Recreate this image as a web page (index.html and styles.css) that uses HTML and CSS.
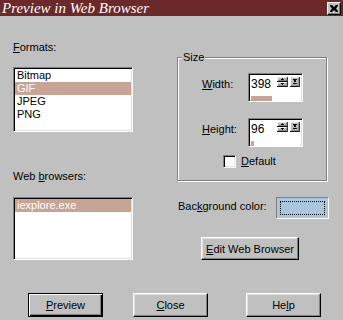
FILE: index.html
```html
<!DOCTYPE html>
<html lang="en">
<head>
  <meta charset="UTF-8">
  <title>Preview in Web Browser</title>
  <link rel="stylesheet" href="styles.css">
</head>
<body>
  <div class="window">
    <!-- title bar -->
    <div class="titlebar">
      <span class="title">Preview in Web Browser</span>
      <button class="close-btn">
        <svg width="8" height="7" viewBox="0 0 8 7">
          <path d="M0 0h2l2 2 2-2h2v1L6 3.5 8 6v1H6L4 5 2 7H0V6l2-2.5L0 1z" fill="#000"/>
        </svg>
      </button>
    </div>

    <div class="dialog">
      <!-- left column: lists -->
      <div class="col-left">
        <label class="caption"><u>F</u>ormats:</label>
        <ul class="listbox listbox-formats">
          <li>Bitmap</li>
          <li class="selected">GIF</li>
          <li>JPEG</li>
          <li>PNG</li>
        </ul>
        <label class="caption caption-browsers">Web <u>b</u>rowsers:</label>
        <ul class="listbox listbox-browsers">
          <li class="selected">iexplore.exe</li>
        </ul>
      </div>

      <!-- right column: size and colour -->
      <div class="col-right">
        <fieldset class="group">
          <legend>Size</legend>
          <div class="group-body">
            <div class="field-row">
              <label class="field-label"><u>W</u>idth:</label>
              <div class="spin">
                <div class="spin-main">
                  <span class="spin-value">398</span>
                  <svg class="spin-arrows" width="11" height="10" viewBox="0 0 11 10">
                    <rect x="0" y="0" width="11" height="5" fill="#000"/>
                    <rect x="0" y="0" width="10" height="4" fill="#fff"/>
                    <rect x="1" y="1" width="9" height="3" fill="#808080"/>
                    <rect x="1" y="1" width="8" height="2" fill="#c0c0c0"/>
                    <rect x="5" y="1" width="1" height="1" fill="#000"/>
                    <rect x="4" y="2" width="3" height="1" fill="#000"/>
                    <rect x="0" y="5" width="11" height="5" fill="#000"/>
                    <rect x="0" y="5" width="10" height="4" fill="#fff"/>
                    <rect x="1" y="6" width="9" height="3" fill="#808080"/>
                    <rect x="1" y="6" width="8" height="2" fill="#c0c0c0"/>
                    <rect x="4" y="6" width="3" height="1" fill="#000"/>
                    <rect x="5" y="7" width="1" height="1" fill="#000"/>
                  </svg>
                  <svg class="spin-drop" width="10" height="10" viewBox="0 0 10 10">
                    <rect x="0" y="0" width="10" height="10" fill="#000"/>
                    <rect x="0" y="0" width="9" height="9" fill="#fff"/>
                    <rect x="1" y="1" width="8" height="8" fill="#808080"/>
                    <rect x="1" y="1" width="7" height="7" fill="#c0c0c0"/>
                    <rect x="3" y="2" width="4" height="1" fill="#000"/>
                    <rect x="4" y="3" width="2" height="2" fill="#000"/>
                    <rect x="3" y="6" width="4" height="1" fill="#000"/>
                  </svg>
                </div>
                <div class="spin-bar"><div class="spin-fill" style="width: 21px"></div></div>
              </div>
            </div>
            <div class="field-row field-row-height">
              <label class="field-label"><u>H</u>eight:</label>
              <div class="spin">
                <div class="spin-main">
                  <span class="spin-value">96</span>
                  <svg class="spin-arrows" width="11" height="10" viewBox="0 0 11 10">
                    <rect x="0" y="0" width="11" height="5" fill="#000"/>
                    <rect x="0" y="0" width="10" height="4" fill="#fff"/>
                    <rect x="1" y="1" width="9" height="3" fill="#808080"/>
                    <rect x="1" y="1" width="8" height="2" fill="#c0c0c0"/>
                    <rect x="5" y="1" width="1" height="1" fill="#000"/>
                    <rect x="4" y="2" width="3" height="1" fill="#000"/>
                    <rect x="0" y="5" width="11" height="5" fill="#000"/>
                    <rect x="0" y="5" width="10" height="4" fill="#fff"/>
                    <rect x="1" y="6" width="9" height="3" fill="#808080"/>
                    <rect x="1" y="6" width="8" height="2" fill="#c0c0c0"/>
                    <rect x="4" y="6" width="3" height="1" fill="#000"/>
                    <rect x="5" y="7" width="1" height="1" fill="#000"/>
                  </svg>
                  <svg class="spin-drop" width="10" height="10" viewBox="0 0 10 10">
                    <rect x="0" y="0" width="10" height="10" fill="#000"/>
                    <rect x="0" y="0" width="9" height="9" fill="#fff"/>
                    <rect x="1" y="1" width="8" height="8" fill="#808080"/>
                    <rect x="1" y="1" width="7" height="7" fill="#c0c0c0"/>
                    <rect x="3" y="2" width="4" height="1" fill="#000"/>
                    <rect x="4" y="3" width="2" height="2" fill="#000"/>
                    <rect x="3" y="6" width="4" height="1" fill="#000"/>
                  </svg>
                </div>
                <div class="spin-bar"><div class="spin-fill" style="width: 3px"></div></div>
              </div>
            </div>
            <div class="check-row">
              <span class="checkbox"></span>
              <label><u>D</u>efault</label>
            </div>
          </div>
        </fieldset>

        <div class="bg-row">
          <label class="bg-label">Bac<u>k</u>ground color:</label>
          <div class="swatch"><div class="swatch-focus"></div></div>
        </div>

        <button class="btn btn-edit"><u>E</u>dit Web Browser</button>
      </div>
    </div>

    <!-- dialog buttons -->
    <div class="footer">
      <button class="btn btn-default"><u>P</u>review</button>
      <button class="btn btn-close"><u>C</u>lose</button>
      <button class="btn btn-help">He<u>l</u>p</button>
    </div>
  </div>
</body>
</html>
```

FILE: styles.css
```css
/* reset */
* { box-sizing: border-box; margin: 0; padding: 0; }

html, body {
  width: 343px;
  height: 320px;
  overflow: hidden;
}

body {
  background: #c0c0c0;
  color: #000;
  font-family: "Liberation Sans", Arial, sans-serif;
  font-size: 11px;
}

/* title bar */
.titlebar {
  height: 16px;
  background: #6b2929;
  display: flex;
  align-items: center;
  justify-content: space-between;
  padding: 0 2px;
}

.title {
  font-family: "Liberation Serif", serif;
  font-style: italic;
  font-size: 15px;
  line-height: 16px;
  color: #fff;
  white-space: nowrap;
}

.close-btn {
  width: 14px;
  height: 13px;
  display: flex;
  align-items: center;
  justify-content: center;
  background: #c0c0c0;
  border: 1px solid;
  border-color: #fff #000 #000 #fff;
  box-shadow: inset -1px -1px #808080;
}

/* main area */
.dialog {
  display: flex;
  padding-left: 13px;
}

.col-left {
  width: 120px;
  padding-top: 25px;
  display: flex;
  flex-direction: column;
}

.col-right {
  width: 152px;
  margin-left: 44px;
  padding-top: 35px;
}

.caption {
  display: block;
  height: 13px;
  line-height: 13px;
}

.caption-browsers {
  margin-top: 38px;
}

.listbox {
  list-style: none;
  background: #fff;
  border: 1px solid;
  border-color: #808080 #fff #fff #808080;
  box-shadow: inset 1px 1px #000, inset -1px -1px #dfdfdf;
  padding: 1px;
}

.listbox li {
  height: 13px;
  line-height: 13px;
  padding-left: 2px;
}

.listbox li.selected {
  background: #c8a496;
  color: #fff;
}

.listbox-formats {
  margin-top: 13px;
  height: 65px;
}

.listbox-browsers {
  margin-top: 14px;
  height: 63px;
}

/* size group */
.group {
  width: 150px;
  height: 130px;
  border: 1px solid #808080;
  box-shadow: inset 1px 1px #fff, 1px 1px #fff;
  min-inline-size: 0;
}

.group legend {
  margin-left: 4px;
  padding: 0 1px;
  line-height: 13px;
  background: #c0c0c0;
}

.group-body {
  padding: 9px 0 0 24px;
}

.field-row {
  display: flex;
  align-items: flex-start;
}

.field-row-height {
  margin-top: 16px;
}

.field-label {
  width: 46px;
  line-height: 13px;
  margin-top: 5px;
}

.spin {
  width: 55px;
  height: 29px;
  background: #fff;
  border: 1px solid;
  border-color: #808080 #fff #fff #808080;
  box-shadow: inset 1px 1px #000, inset -1px -1px #dfdfdf;
  padding: 2px 2px 0 2px;
}

.spin-main {
  display: flex;
  align-items: flex-start;
  height: 16px;
}

.spin-value {
  width: 27px;
  font-size: 12px;
  line-height: 16px;
}

.spin-arrows {
  margin-top: 1px;
}

.spin-drop {
  margin-top: 1px;
  margin-left: 2px;
}

.spin-bar {
  margin-top: 4px;
  height: 5px;
  background: #fff;
}

.spin-fill {
  height: 100%;
  background: #c8a496;
}

.check-row {
  display: flex;
  align-items: center;
  gap: 5px;
  margin-top: 8px;
  padding-left: 21px;
  line-height: 13px;
}

.checkbox {
  width: 13px;
  height: 13px;
  background: #fff;
  border: 1px solid;
  border-color: #808080 #fff #fff #808080;
  box-shadow: inset 1px 1px #000, inset -1px -1px #dfdfdf;
}

/* background colour */
.bg-row {
  display: flex;
  align-items: center;
  justify-content: space-between;
  margin-top: 16px;
}

.bg-label {
  padding-left: 1px;
  line-height: 13px;
  margin-top: -3px;
}

.swatch {
  width: 53px;
  height: 22px;
  background: #a9c6de;
  border: 1px solid;
  border-color: #808080 #fff #fff #808080;
  padding: 3px;
}

.swatch-focus {
  height: 100%;
  border: 1px dotted #000;
  border-radius: 1px;
}

/* buttons */
.btn {
  display: block;
  font: inherit;
  color: #000;
  background: #c0c0c0;
  border: 1px solid;
  border-color: #fff #000 #000 #fff;
  box-shadow: inset -1px -1px #808080, inset 1px 1px #dfdfdf;
  text-align: center;
  cursor: pointer;
}

.btn-edit {
  width: 98px;
  height: 23px;
  margin: 18px 0 0 24px;
}

.footer {
  display: flex;
  padding-left: 28px;
  margin-top: 33px;
}

.footer .btn {
  width: 75px;
  height: 24px;
}

.btn-default {
  border-color: #000;
  box-shadow: inset 1px 1px #fff, inset -1px -1px #000, inset -2px -2px #808080;
}

.btn-close {
  margin-left: 30px;
}

.btn-help {
  margin-left: 38px;
}
```
